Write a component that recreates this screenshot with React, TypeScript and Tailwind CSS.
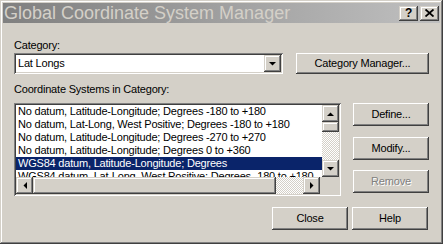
import React from "react";

const raised =
  "bg-[#d4d0c8] shadow-[inset_-1px_-1px_#404040,inset_1px_1px_#fff,inset_-2px_-2px_#808080,inset_2px_2px_#d4d0c8]";
const scrollBtn =
  "bg-[#d4d0c8] shadow-[inset_-1px_-1px_#404040,inset_1px_1px_#d4d0c8,inset_-2px_-2px_#808080,inset_2px_2px_#fff]";
const sunken =
  "shadow-[inset_1px_1px_#808080,inset_-1px_-1px_#fff,inset_2px_2px_#404040,inset_-2px_-2px_#d4d0c8]";
const checker =
  "bg-[repeating-conic-gradient(#d4d0c8_0_25%,#ffffff_0_50%)] bg-[length:2px_2px]";

const rows = [
  "No datum, Latitude-Longitude; Degrees -180 to +180",
  "No datum, Lat-Long, West Positive; Degrees -180 to +180",
  "No datum, Latitude-Longitude; Degrees -270 to +270",
  "No datum, Latitude-Longitude; Degrees 0 to +360",
  "WGS84 datum, Latitude-Longitude; Degrees",
  "WGS84 datum, Lat-Long, West Positive; Degrees -180 to +180",
];

const Arrow = ({ dir }: { dir: "up" | "down" | "left" | "right" }) => {
  const pts = {
    up: "0,4 7,4 3.5,0.5",
    down: "0,0 7,0 3.5,3.5",
    left: "4,0 4,7 0.5,3.5",
    right: "0,0 0,7 3.5,3.5",
  }[dir];
  const vertical = dir === "up" || dir === "down";
  return (
    <svg width={vertical ? 7 : 4} height={vertical ? 4 : 7} viewBox={vertical ? "0 0 7 4" : "0 0 4 7"}>
      <polygon points={pts} fill="#000" />
    </svg>
  );
};

const Button = ({ label, disabled, className }: { label: string; disabled?: boolean; className?: string }) => (
  <div className={`${raised} flex items-center justify-center ${className ?? ""}`}>
    {disabled ? (
      <span className="text-[#808080] [text-shadow:1px_1px_#fff]">{label}</span>
    ) : (
      <span className="text-black">{label}</span>
    )}
  </div>
);

export default function App() {
  return (
    <div className="w-[443px] h-[244px] bg-[#d4d0c8] p-[3px] shadow-[inset_-1px_-1px_#404040,inset_1px_1px_#d4d0c8,inset_-2px_-2px_#808080,inset_2px_2px_#fff] font-['Liberation_Sans',Arial,sans-serif] text-[11px] leading-[13px] tracking-[-0.2px] overflow-hidden">
      {/* title bar */}
      <div className="h-[20px] flex items-center bg-gradient-to-r from-[#808080] to-[#c0c0c0]">
        <span className="pl-[1px] text-[18px] leading-[20px] text-[#d4d0c8] tracking-[0px]">
          Global Coordinate System Manager
        </span>
        <div className="ml-auto flex items-center mr-[1px]">
          <div className={`${scrollBtn} w-[19px] h-[15px] flex items-center justify-center text-[12px] font-bold leading-none`}>
            ?
          </div>
          <div className={`${scrollBtn} ml-[2px] w-[19px] h-[15px] flex items-center justify-center`}>
            <svg width="9" height="8" viewBox="0 0 9 8">
              <path d="M0.5 0.5 L8.5 7.5 M8.5 0.5 L0.5 7.5" stroke="#000" strokeWidth="1.8" />
            </svg>
          </div>
        </div>
      </div>

      <div className="pl-[11px] pt-[16px] flex flex-col">
        <div className="h-[13px]">Category:</div>

        <div className="mt-[1px] flex">
          <div className={`${sunken} bg-white w-[269px] h-[21px] p-[2px] flex`}>
            <div className="flex-1 pl-[2px] flex items-center">Lat Longs</div>
            <div className={`${scrollBtn} w-[17px] h-[17px] flex items-center justify-center`}>
              <Arrow dir="down" />
            </div>
          </div>
          <Button label="Category Manager..." className="ml-[13px] w-[133px] h-[21px]" />
        </div>

        <div className="mt-[9px] h-[13px]">Coordinate Systems in Category:</div>

        <div className="mt-[7px] flex">
          <div className={`${sunken} bg-white w-[327px] h-[93px] p-[2px] flex flex-col`}>
            <div className="flex h-[72px]">
              <div className="flex-1 overflow-hidden">
                {rows.map((r, i) => (
                  <div
                    key={i}
                    className={`h-[13px] pl-[2px] whitespace-nowrap ${i === 4 ? "bg-[#0a246a] text-white" : "text-black"}`}
                  >
                    {r}
                  </div>
                ))}
              </div>
              <div className="w-[17px] flex flex-col">
                <div className={`${scrollBtn} h-[17px] flex items-center justify-center`}>
                  <Arrow dir="up" />
                </div>
                <div className={`${scrollBtn} h-[10px]`} />
                <div className={`flex-1 ${checker}`} />
                <div className={`${scrollBtn} h-[17px] flex items-center justify-center`}>
                  <Arrow dir="down" />
                </div>
              </div>
            </div>
            <div className="flex h-[17px]">
              <div className={`${scrollBtn} w-[17px] flex items-center justify-center`}>
                <Arrow dir="left" />
              </div>
              <div className={`${scrollBtn} w-[243px]`} />
              <div className={`flex-1 ${checker}`} />
              <div className={`${scrollBtn} w-[17px] flex items-center justify-center`}>
                <Arrow dir="right" />
              </div>
              <div className="w-[19px] bg-[#d4d0c8]" />
            </div>
          </div>

          <div className="ml-[12px] flex flex-col">
            <Button label="Define..." className="w-[76px] h-[23px]" />
            <Button label="Modify..." className="mt-[11px] w-[76px] h-[23px]" />
            <Button label="Remove" disabled className="mt-[10px] w-[76px] h-[23px]" />
          </div>
        </div>

        <div className="mt-[11px] flex pl-[258px]">
          <Button label="Close" className="w-[76px] h-[23px]" />
          <Button label="Help" className="ml-[4px] w-[76px] h-[23px]" />
        </div>
      </div>
    </div>
  );
}
